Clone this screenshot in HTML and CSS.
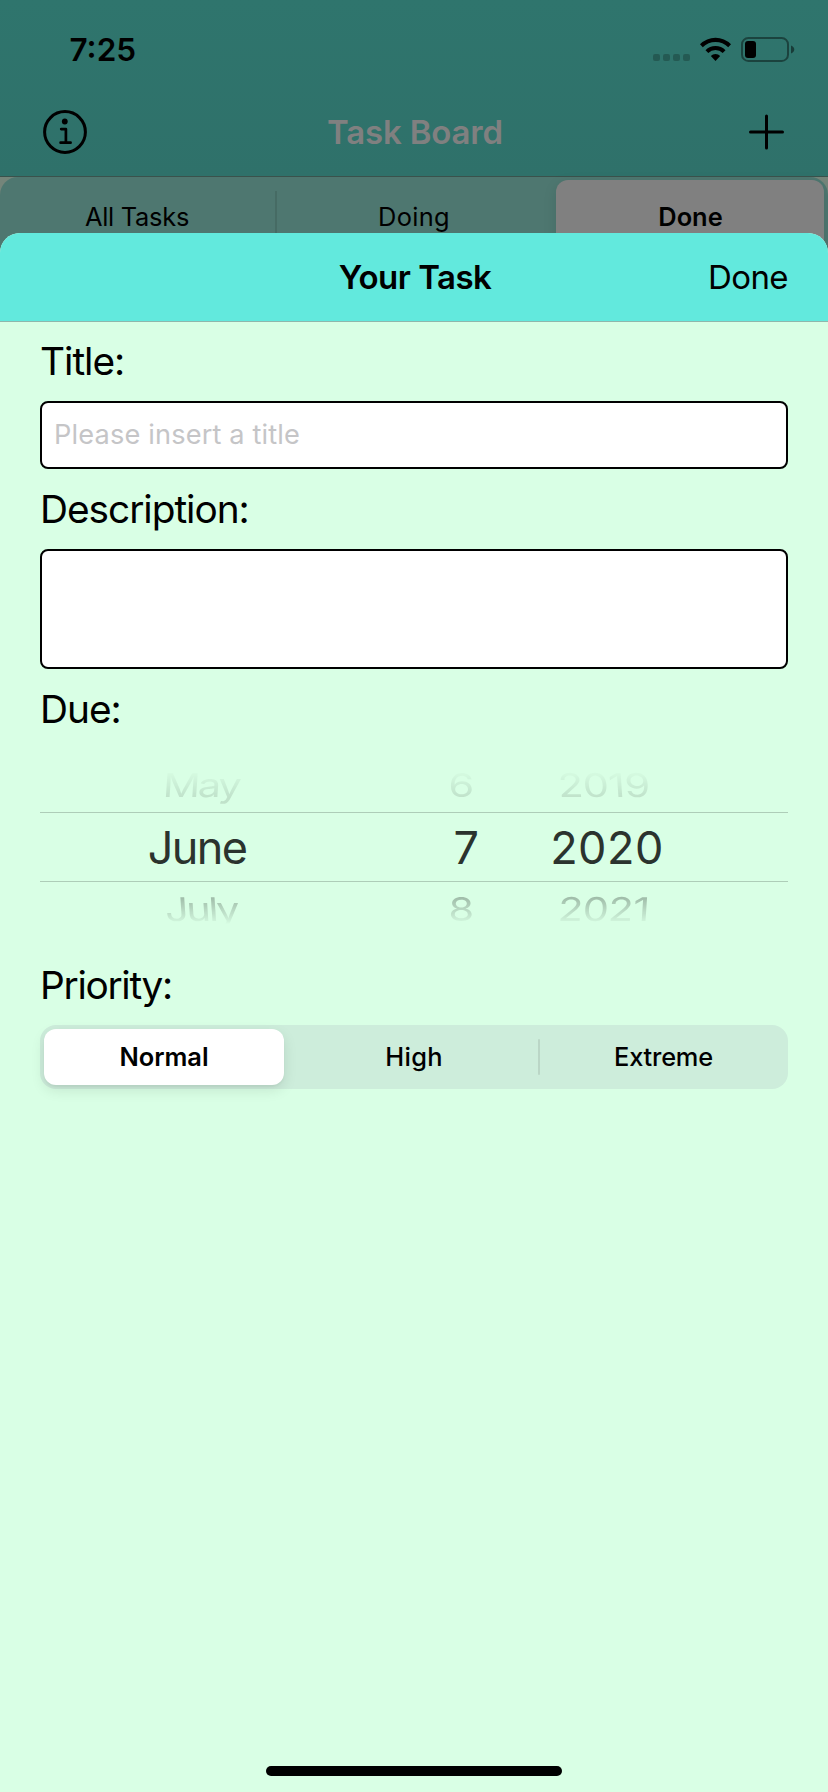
FILE: index.html
```html
<!DOCTYPE html>
<html lang="en">
<head>
<meta charset="utf-8">
<title>Your Task</title>
<link rel="stylesheet" href="styles.css">
</head>
<body>
<div class="screen">
  <div class="board">
    <header class="board-head">
      <div class="status">
        <span class="time">7:25</span>
        <svg class="status-icons" width="144" height="28" viewBox="652 35 144 28">
          <g opacity=".22">
            <rect x="653" y="54" width="7" height="7" rx="2"/>
            <rect x="663" y="54" width="7" height="7" rx="2"/>
            <rect x="673" y="54" width="7" height="7" rx="2"/>
            <rect x="683" y="54" width="7" height="7" rx="2"/>
          </g>
          <g transform="translate(699.5 37)">
            <path d="M.5 7.2A21.8 21.8 0 0 1 31.5 7.2L28.7 10.2A18 18 0 0 0 3.3 10.2Z"/>
            <path d="M6 13.2A14.2 14.2 0 0 1 26 13.2L23.2 16.1A10.2 10.2 0 0 0 8.8 16.1Z"/>
            <path d="M11.3 19A6.8 6.8 0 0 1 20.7 19L16 24Z"/>
          </g>
          <rect x="742" y="38" width="46" height="23" rx="6.3" fill="none" stroke="#000" stroke-width="2" opacity=".42"/>
          <path d="M791 45.5C795.4 47 795.4 52 791 53.5Z" opacity=".48"/>
          <rect x="745" y="41" width="11" height="17" rx="3"/>
        </svg>
      </div>
      <div class="board-nav">
        <svg width="46" height="46" viewBox="0 0 46 46" fill="none" stroke="#000" stroke-width="3">
          <circle cx="23" cy="23" r="20.4"/>
          <circle cx="22.8" cy="12.5" r="2.9" fill="#000" stroke="none"/>
          <path d="M19.2 20.1H23.9V33.5M18.6 33.7H28.6" stroke-width="2.7" stroke-linecap="round" stroke-linejoin="round"/>
        </svg>
        <h1 class="board-title">Task Board</h1>
        <svg width="36" height="36" viewBox="0 0 36 36" stroke="#000" stroke-width="3" stroke-linecap="round">
          <path d="M18.5 2V34M2.5 18H34.5"/>
        </svg>
      </div>
    </header>
    <div class="filter">
      <span class="filter-item tight">All Tasks</span>
      <span class="filter-item divided">Doing</span>
      <span class="filter-item chosen">Done</span>
    </div>
  </div>

  <section class="sheet">
    <header class="sheet-head">
      <h2 class="sheet-title">Your Task</h2>
      <span class="sheet-done">Done</span>
    </header>
    <form class="form">
      <label class="label">Title:</label>
      <input class="field" type="text" placeholder="Please insert a title">
      <label class="label">Description:</label>
      <div class="area"></div>
      <label class="label due">Due:</label>
      <div class="picker">
        <div class="row before"><span class="month">May</span><span>6</span><span class="year">2019</span></div>
        <div class="row current"><span class="month">June</span><span>7</span><span class="year">2020</span></div>
        <div class="row after"><span class="month">July</span><span>8</span><span class="year">2021</span></div>
      </div>
      <label class="label priority">Priority:</label>
      <div class="levels">
        <span class="level picked">Normal</span>
        <span class="level high">High</span>
        <i class="level-line"></i>
        <span class="level extreme">Extreme</span>
      </div>
    </form>
    <div class="home"></div>
  </section>
</div>
</body>
</html>
```
FILE: styles.css
```css
* { box-sizing: border-box; }

body {
  margin: 0;
  background: #75857a;
  color: #000;
  font-family: Inter, "Liberation Sans", sans-serif;
}

h1, h2 { margin: 0; font-weight: 600; }
svg { display: block; }

.screen {
  position: relative;
  width: 828px;
  height: 1792px;
  overflow: hidden;
  background: #75857a;
}

/* Dimmed task board behind the sheet */
.board-head {
  height: 177px;
  background: linear-gradient(#2f756d, #2f716a);
  border-bottom: 1px solid #3a524c;
}

.status {
  display: flex;
  justify-content: space-between;
  height: 88px;
  padding: 35px 32px 0 69.5px;
}

.time {
  height: 29px;
  font-size: 31.5px;
  font-weight: 600;
  line-height: 29px;
}

.board-nav {
  display: grid;
  grid-template-columns: 46px 1fr 36px;
  align-items: center;
  height: 88px;
  padding: 0 44px 0 42px;
}

.board-title {
  padding-right: 6px;
  text-align: center;
  font-size: 33px;
  letter-spacing: -.17px;
  line-height: 48px;
  color: #808080;
}

.filter {
  display: grid;
  grid-template-columns: 275px 281px 268px;
  height: 80px;
  border-radius: 18px 18px 0 0;
  background: #4e7770;
  font-size: 25.4px;
}

.filter-item {
  height: 77px;
  margin-top: 3px;
  padding-top: 15px;
  line-height: 44px;
  text-align: center;
}

.tight { letter-spacing: -.25px; padding-right: 1px; }

.divided {
  letter-spacing: .3px;
  padding-right: 3px;
  background: linear-gradient(#466b64, #466b64) 0 11px / 2px 66px no-repeat;
}

.chosen {
  padding-left: 1px;
  border-radius: 12px 12px 0 0;
  background: #808080;
  box-shadow: 0 4px 14px rgba(0, 0, 0, .1);
  font-weight: 600;
}

/* Task sheet, lying over the board */
.sheet {
  position: absolute;
  inset: 233px 0 0;
  display: flex;
  flex-direction: column;
  overflow: hidden;
  border-radius: 20px 20px 0 0;
  background: #d9ffe5;
}

.sheet-head {
  display: grid;
  grid-template-columns: 1fr auto 1fr;
  align-items: center;
  height: 89px;
  padding: 0 40px;
  border-bottom: 1px solid #8fb7ac;
  background: #62e9dd;
  font-size: 33px;
  line-height: 44px;
}

.sheet-title {
  grid-column: 2;
  padding-left: 2px;
  font-size: 33px;
  letter-spacing: -.5px;
}

.sheet-done {
  justify-self: end;
  letter-spacing: -.6px;
}

.form {
  display: flex;
  flex-direction: column;
  padding: 0 40px;
}

.label {
  height: 79px;
  font-size: 38.8px;
  letter-spacing: -1.03px;
  line-height: 77px;
}

.field {
  height: 68px;
  margin: 0 0 1px;
  padding: 0 12px 1px;
  border: 2px solid #000;
  border-radius: 8px;
  background: #fff;
  font: 27.2px Inter, "Liberation Sans", sans-serif;
  letter-spacing: .15px;
}

.field::placeholder { color: #c5c5c7; opacity: 1; }

.area {
  height: 120px;
  border: 2px solid #000;
  border-radius: 8px;
  background: #fff;
}

.due { height: 80px; line-height: 79px; }
.priority { height: 80px; line-height: 79px; letter-spacing: -1.3px; }

.picker {
  height: 196px;
  padding-top: 9px;
}

.row {
  display: grid;
  align-items: center;
  justify-items: center;
  white-space: nowrap;
  color: #2b332e;
}

.current {
  grid-template-columns: 314px 225px 56px;
  height: 70px;
  border-top: 1px solid #aecdb8;
  border-bottom: 1px solid #aecdb8;
  font-size: 45px;
  letter-spacing: .5px;
}

.current .month { letter-spacing: -1.6px; }

.before, .after {
  grid-template-columns: 322px 198px 88px;
  height: 54px;
  font-size: 41.5px;
  letter-spacing: -.6px;
  line-height: 54px;
}

.before .month, .after .month { letter-spacing: -2.4px; }

/* The wheel curves away and fades out above and below the current row */
.before { -webkit-mask-image: linear-gradient(transparent 11px, rgba(0,0,0,.14) 39px); mask-image: linear-gradient(transparent 11px, rgba(0,0,0,.14) 39px); }
.after { -webkit-mask-image: linear-gradient(rgba(0,0,0,.34) 14px, rgba(0,0,0,.06) 39px, transparent 42px); mask-image: linear-gradient(rgba(0,0,0,.34) 14px, rgba(0,0,0,.06) 39px, transparent 42px); }

.before span, .after span { transform: scaleY(.79); }
.before .month { transform: scaleY(.79) skewX(-3deg); }
.before .year { transform: scaleY(.79) skewX(3deg); }
.after .month { transform: scaleY(.79) skewX(3deg); }
.after .year { transform: scaleY(.79) skewX(-3deg); }

.levels {
  display: grid;
  grid-template-columns: 240px 254px 2px 244px;
  height: 64px;
  padding: 4px;
  border-radius: 16px;
  background: #cdeddb;
  font-size: 25.4px;
  font-weight: 500;
  line-height: 56px;
  text-align: center;
}

.high { padding-left: 6px; letter-spacing: .3px; }
.extreme { padding-left: 3px; letter-spacing: -.2px; }

.picked {
  border-radius: 12px;
  background: #fff;
  box-shadow: 0 5px 14px rgba(0, 0, 0, .1), 0 2px 2px rgba(0, 0, 0, .04);
  font-weight: 600;
}

.level-line {
  height: 36px;
  margin-top: 10px;
  background: #bad6c6;
  border-radius: 1px;
}

.home {
  width: 296px;
  height: 10px;
  margin: auto auto 16px;
  border-radius: 5px;
  background: #000;
}
```
